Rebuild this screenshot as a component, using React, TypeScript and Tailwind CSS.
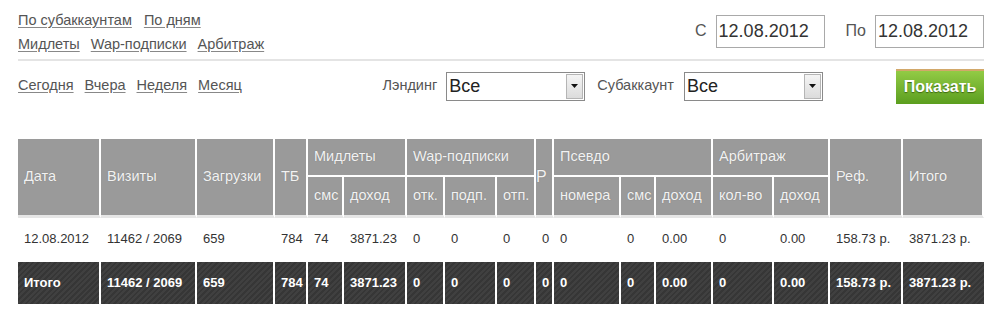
import React from 'react';

const sans = "font-['Liberation_Sans',Arial,sans-serif]";

const colWidths = [83, 96, 78, 33, 36, 63, 38, 52, 39, 18, 67, 35, 57, 61, 56, 73, 81];

const dataRow = [
  '12.08.2012',
  '11462 / 2069',
  '659',
  '784',
  '74',
  '3871.23',
  '0',
  '0',
  '0',
  '0',
  '0',
  '0',
  '0.00',
  '0',
  '0.00',
  '158.73 р.',
  '3871.23 р.',
];

const totalRow = ['Итого', ...dataRow.slice(1)];

const Link = ({ children }: { children: React.ReactNode }) => (
  <a href="#" className="underline decoration-[#888] underline-offset-2 text-[#555]">
    {children}
  </a>
);

const DateField = ({ value }: { value: string }) => (
  <div className="w-[109px] h-[33px] border border-[#a9a9a9] bg-white flex items-center pl-[2px] text-[18px] text-[#333] leading-none">
    {value}
  </div>
);

const SelectBox = () => (
  <div className="w-[139px] h-[29px] border border-[#8a8a8a] bg-white flex items-stretch">
    <div className="flex-1 flex items-center pl-[2px] text-[18px] text-[#222] leading-none">Все</div>
    <div className="w-[17px] m-[1px] bg-gradient-to-b from-[#f4f4f4] to-[#dcdcdc] border border-[#b5b5b5] flex items-center justify-center">
      <svg width="7" height="4" viewBox="0 0 7 4">
        <path d="M0 0h7L3.5 4z" fill="#111" />
      </svg>
    </div>
  </div>
);

const th =
  'bg-[#9a9a9a] text-[#f2f2f2] font-normal text-left align-middle pl-[6px] border-r-2 border-white whitespace-nowrap [text-shadow:0_0_1px_#777] text-[14.5px]';
const thBottom = 'border-b-[3px] border-b-[#e6e6e6]';

const App = () => {
  return (
    <div className={`w-[999px] h-[312px] overflow-hidden bg-white pl-[18px] pr-[15px] ${sans} text-[#555]`}>
      <div className="flex justify-between h-[59px] pt-[12px]">
        <div className="flex flex-col gap-[7px] text-[14.5px] leading-[17px]">
          <div className="flex gap-[12px]">
            <Link>По субаккаунтам</Link>
            <Link>По дням</Link>
          </div>
          <div className="flex gap-[11px]">
            <Link>Мидлеты</Link>
            <Link>Wap-подписки</Link>
            <Link>Арбитраж</Link>
          </div>
        </div>
        <div className="flex items-center h-[34px] pt-[4px] text-[16px]">
          <span className="mr-[9px]">С</span>
          <DateField value="12.08.2012" />
          <span className="ml-[21px] mr-[9px]">По</span>
          <DateField value="12.08.2012" />
        </div>
      </div>
      <div className="h-[2px] bg-[#e4e4e4]" />
      <div className="flex items-center h-[50px] text-[14.5px]">
        <div className="flex gap-[11px]">
          <Link>Сегодня</Link>
          <Link>Вчера</Link>
          <Link>Неделя</Link>
          <Link>Месяц</Link>
        </div>
        <div className="ml-auto flex items-center">
          <span className="mr-[9px]">Лэндинг</span>
          <SelectBox />
          <span className="ml-[12px] mr-[10px]">Субаккаунт</span>
          <SelectBox />
        </div>
        <button className="ml-[73px] w-[88px] h-[35px] bg-gradient-to-b from-[#92cb45] to-[#5b9e1e] border-t-2 border-t-[#d2a86a] text-white font-bold text-[16px] [text-shadow:0_1px_1px_#3d6a10]">
          Показать
        </button>
      </div>
      <table className="mt-[28px] w-[966px] table-fixed border-separate border-spacing-0 text-[13px]">
        <colgroup>
          {colWidths.map((w, i) => (
            <col key={i} style={{ width: w }} />
          ))}
        </colgroup>
        <thead>
          <tr className="h-[38px]">
            <th rowSpan={2} className={`${th} ${thBottom}`}>Дата</th>
            <th rowSpan={2} className={`${th} ${thBottom}`}>Визиты</th>
            <th rowSpan={2} className={`${th} ${thBottom}`}>Загрузки</th>
            <th rowSpan={2} className={`${th} ${thBottom}`}>ТБ</th>
            <th colSpan={2} className={`${th} border-b-2 border-b-white`}>Мидлеты</th>
            <th colSpan={3} className={`${th} border-b-2 border-b-white`}>Wap-подписки</th>
            <th rowSpan={2} className={`${th} ${thBottom} !pl-0 text-center text-[16px]`}>Р</th>
            <th colSpan={3} className={`${th} border-b-2 border-b-white`}>Псевдо</th>
            <th colSpan={2} className={`${th} border-b-2 border-b-white`}>Арбитраж</th>
            <th rowSpan={2} className={`${th} ${thBottom}`}>Реф.</th>
            <th rowSpan={2} className={`${th} ${thBottom} border-r-0`}>Итого</th>
          </tr>
          <tr className="h-[41px]">
            {['смс', 'доход', 'отк.', 'подп.', 'отп.', 'номера', 'смс', 'доход', 'кол-во', 'доход'].map(
              (t, i) => (
                <th key={i} className={`${th} ${thBottom}`}>
                  {t}
                </th>
              )
            )}
          </tr>
        </thead>
        <tbody>
          <tr className="h-[44px]">
            {dataRow.map((v, i) => (
              <td key={i} className="pl-[6px] text-[#333] align-middle whitespace-nowrap border-b-2 border-white">
                {v}
              </td>
            ))}
          </tr>
          <tr className="h-[42px]">
            {totalRow.map((v, i) => (
              <td
                key={i}
                className={`pl-[6px] align-middle whitespace-nowrap text-white font-bold bg-[#3b3b3b] bg-[repeating-linear-gradient(135deg,#404040_0px,#404040_2px,#363636_2px,#363636_4px)] ${
                  i < totalRow.length - 1 ? 'border-r-2 border-white' : ''
                }`}
              >
                {v}
              </td>
            ))}
          </tr>
        </tbody>
      </table>
    </div>
  );
};

export default App;
